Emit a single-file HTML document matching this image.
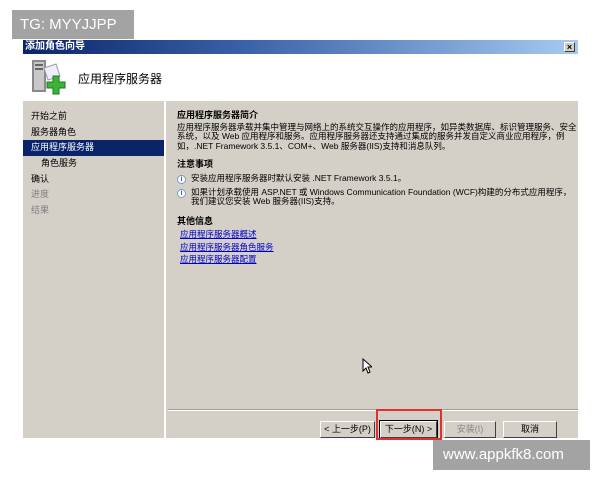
<!DOCTYPE html>
<html><head><meta charset="utf-8"><style>
*{margin:0;padding:0;box-sizing:border-box}
body{width:600px;height:480px;background:#fff;position:relative;overflow:hidden;font-family:"Liberation Sans","Noto Sans CJK SC","WenQuanYi Zen Hei",sans-serif;font-size:9px;color:#000}
.abs{position:absolute}
.title{left:23px;top:40px;width:555px;height:14px;background:linear-gradient(90deg,#0a246a,#3a62a8 40%,#a6caf0);color:#fff;font-weight:bold;font-size:10px;line-height:14px;padding-left:2px}
.close{right:3px;top:2px;width:11px;height:10px;background:#d4d0c8;border:1px solid;border-color:#fff #404040 #404040 #fff;color:#000;font-size:9px;line-height:8px;text-align:center;font-weight:bold}
.head{left:23px;top:54px;width:555px;height:47px;background:#fff}
.gray{left:23px;top:101px;width:555px;height:337px;background:#d4d0c8}
.left{left:23px;top:101px;width:143px;height:337px;background:#d4d0c8;border-right:2px solid #fff}
.nav div{height:15.7px;line-height:15.7px;padding-left:8px;font-size:9px}
.sel{background:#0a246a;color:#fff}
.dis{color:#808080}
.right{left:177px;top:111px;width:400px;line-height:9.5px;font-size:8.5px}
h4{font-size:9px;font-weight:bold;margin-bottom:2px}
a{color:#0000cc;text-decoration:underline;display:block;line-height:12.5px}
.sep{left:168px;top:409px;width:410px;height:2px;border-top:1px solid #a0a0a0;border-bottom:1px solid #fff}
.btn{top:421px;height:17px;background:#d4d0c8;border:1px solid;border-color:#fff #404040 #404040 #fff;font-size:9px;text-align:center;line-height:15px}
.wm{background:#a3a3a3;color:#fff;font-size:15px;line-height:29px}
.row{display:flex;align-items:flex-start}
.info{flex:none;width:9px;height:9px;border-radius:50%;background:#fff;border:1px solid #7b9ec8;color:#2a5fb0;font-size:7px;line-height:7px;text-align:center;font-weight:bold;margin-right:5px;margin-top:1px}
</style></head><body>
<div class="abs wm" style="left:12px;top:10px;width:122px;height:29px;padding-left:8px">TG: MYYJJPP</div>
<div class="abs title">添加角色向导<div class="abs close">×</div></div>
<div class="abs head">
 <svg class="abs" style="left:5px;top:4px" width="40" height="40" viewBox="0 0 40 40">
  <rect x="4" y="2" width="14" height="32" fill="#8a8a8a"/><rect x="6" y="4" width="10" height="28" fill="#c8c8c8"/>
  <rect x="7" y="6" width="8" height="2" fill="#666"/><rect x="7" y="10" width="8" height="2" fill="#666"/>
  <path d="M16 10 L28 6 L32 18 L20 22 Z" fill="#eef" stroke="#99a"/>
  <path d="M19 24h6v-6h6v6h6v6h-6v6h-6v-6h-6z" fill="#3cb43c" stroke="#1a7a1a"/>
 </svg>
 <div class="abs" style="left:55px;top:16px;font-size:12px">应用程序服务器</div>
</div>
<div class="abs gray"></div>
<div class="abs left"><div class="nav" style="margin-top:8px">
 <div>开始之前</div><div>服务器角色</div><div class="sel">应用程序服务器</div><div style="padding-left:18px">角色服务</div><div>确认</div><div class="dis">进度</div><div class="dis">结果</div>
</div></div>
<div class="abs right">
 <h4>应用程序服务器简介</h4>
 <div>应用程序服务器承载并集中管理与网络上的系统交互操作的应用程序，如异类数据库、标识管理服务、安全系统，以及 Web 应用程序和服务。应用程序服务器还支持通过集成的服务并发自定义商业应用程序，例如，.NET Framework 3.5.1、COM+、Web 服务器(IIS)支持和消息队列。</div>
 <h4 style="margin-top:9px">注意事项</h4>
 <div class="row" style="margin-top:4px"><span class="info">i</span><span>安装应用程序服务器时默认安装 .NET Framework 3.5.1。</span></div>
 <div class="row" style="margin-top:4px"><span class="info">i</span><span>如果计划承载使用 ASP.NET 或 Windows Communication Foundation (WCF)构建的分布式应用程序，我们建议您安装 Web 服务器(IIS)支持。</span></div>
 <h4 style="margin-top:10px">其他信息</h4>
 <a style="padding-left:3px">应用程序服务器概述</a><a style="padding-left:3px">应用程序服务器角色服务</a><a style="padding-left:3px">应用程序服务器配置</a>
</div>
<svg class="abs" style="left:362px;top:358px" width="10" height="16"><path d="M1 1v12l3-3 2 5 2-1-2-5h4z" fill="#fff" stroke="#000"/></svg>
<div class="abs sep"></div>
<div class="abs btn" style="left:320px;width:55px">&lt; 上一步(P)</div>
<div class="abs btn" style="left:380px;width:57px;outline:1px solid #000">下一步(N) &gt;</div>
<div class="abs" style="left:376px;top:409px;width:66px;height:31px;border:2px solid #e03030"></div>
<div class="abs btn" style="left:444px;width:52px;color:#888">安装(I)</div>
<div class="abs btn" style="left:503px;width:54px">取消</div>
<div class="abs wm" style="left:433px;top:440px;width:157px;height:30px;padding-left:10px;font-size:15px">www.appkfk8.com</div>
</body></html>
